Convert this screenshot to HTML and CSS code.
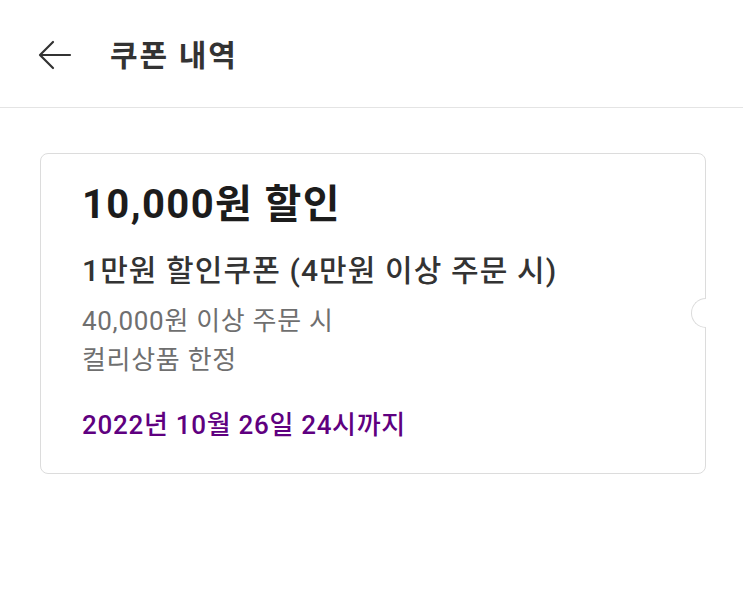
FILE: index.html
```html
<!DOCTYPE html>
<html lang="ko">
<head>
<meta charset="utf-8">
<title>쿠폰 내역</title>
<link rel="stylesheet" href="styles.css">
</head>
<body>
<header class="topbar">
  <button class="back" aria-label="뒤로">
    <svg width="34" height="30" viewBox="0 0 34 30" fill="none" stroke="#333" stroke-width="2.2" stroke-linecap="round" stroke-linejoin="round">
      <path d="M32 15H3"/>
      <path d="M15 2L2 15l13 13"/>
    </svg>
  </button>
  <h1 class="title">쿠폰 내역</h1>
</header>
<main class="content">
  <section class="coupon">
    <h2 class="amount">10,000원 할인</h2>
    <p class="name">1만원 할인쿠폰 (4만원 이상 주문 시)</p>
    <p class="cond">40,000원 이상 주문 시</p>
    <p class="cond">컬리상품 한정</p>
    <p class="expire">2022년 10월 26일 24시까지</p>
    <span class="notch"></span>
  </section>
</main>
</body>
</html>
```
FILE: styles.css
```css
* { box-sizing: border-box; }
html, body { margin: 0; padding: 0; background: #fff; }
body {
  font-family: Roboto, "Noto Sans CJK KR", sans-serif;
  color: #333;
}
.topbar {
  height: 108px;
  border-bottom: 1px solid #e4e4e4;
  display: flex;
  align-items: center;
  padding: 4px 0 0 38px;
}
.back {
  border: 0;
  background: none;
  padding: 0;
  margin: 0;
  width: 34px;
  height: 30px;
  display: flex;
  align-items: center;
  justify-content: center;
  margin-top: -2px;
}
.title {
  margin: 0 0 0 38px;
  font-size: 30px;
  font-weight: 700;
  line-height: 36px;
  color: #333;
  letter-spacing: 2px;
}
.content {
  padding: 45px 38px 0 40px;
}
.coupon {
  position: relative;
  border: 1px solid #dcdcdc;
  border-radius: 8px;
  padding: 27px 20px 30px 41px;
  width: 666px;
}
.coupon p, .coupon h2 { margin: 0; }
.amount {
  font-size: 40px;
  line-height: 48px;
  font-weight: 700;
  color: #1c1c1c;
  letter-spacing: 1.4px;
}
.name {
  margin-top: 22px !important;
  font-size: 30px;
  line-height: 40px;
  font-weight: 500;
  color: #333;
  letter-spacing: 1.1px;
}
.cond {
  font-size: 26px;
  line-height: 39px;
  color: #6f6f6f;
  letter-spacing: 0.7px;
}
.name + .cond { margin-top: 11px; }
.expire {
  margin-top: 27px !important;
  font-size: 26px;
  line-height: 36px;
  font-weight: 500;
  color: #5f0080;
  letter-spacing: 0.7px;
}
.notch {
  position: absolute;
  right: -1px;
  top: 144px;
  width: 15px;
  height: 30px;
  background: #fff;
  border: 1px solid #dcdcdc;
  border-right: 0;
  border-radius: 15px 0 0 15px;
}
```
